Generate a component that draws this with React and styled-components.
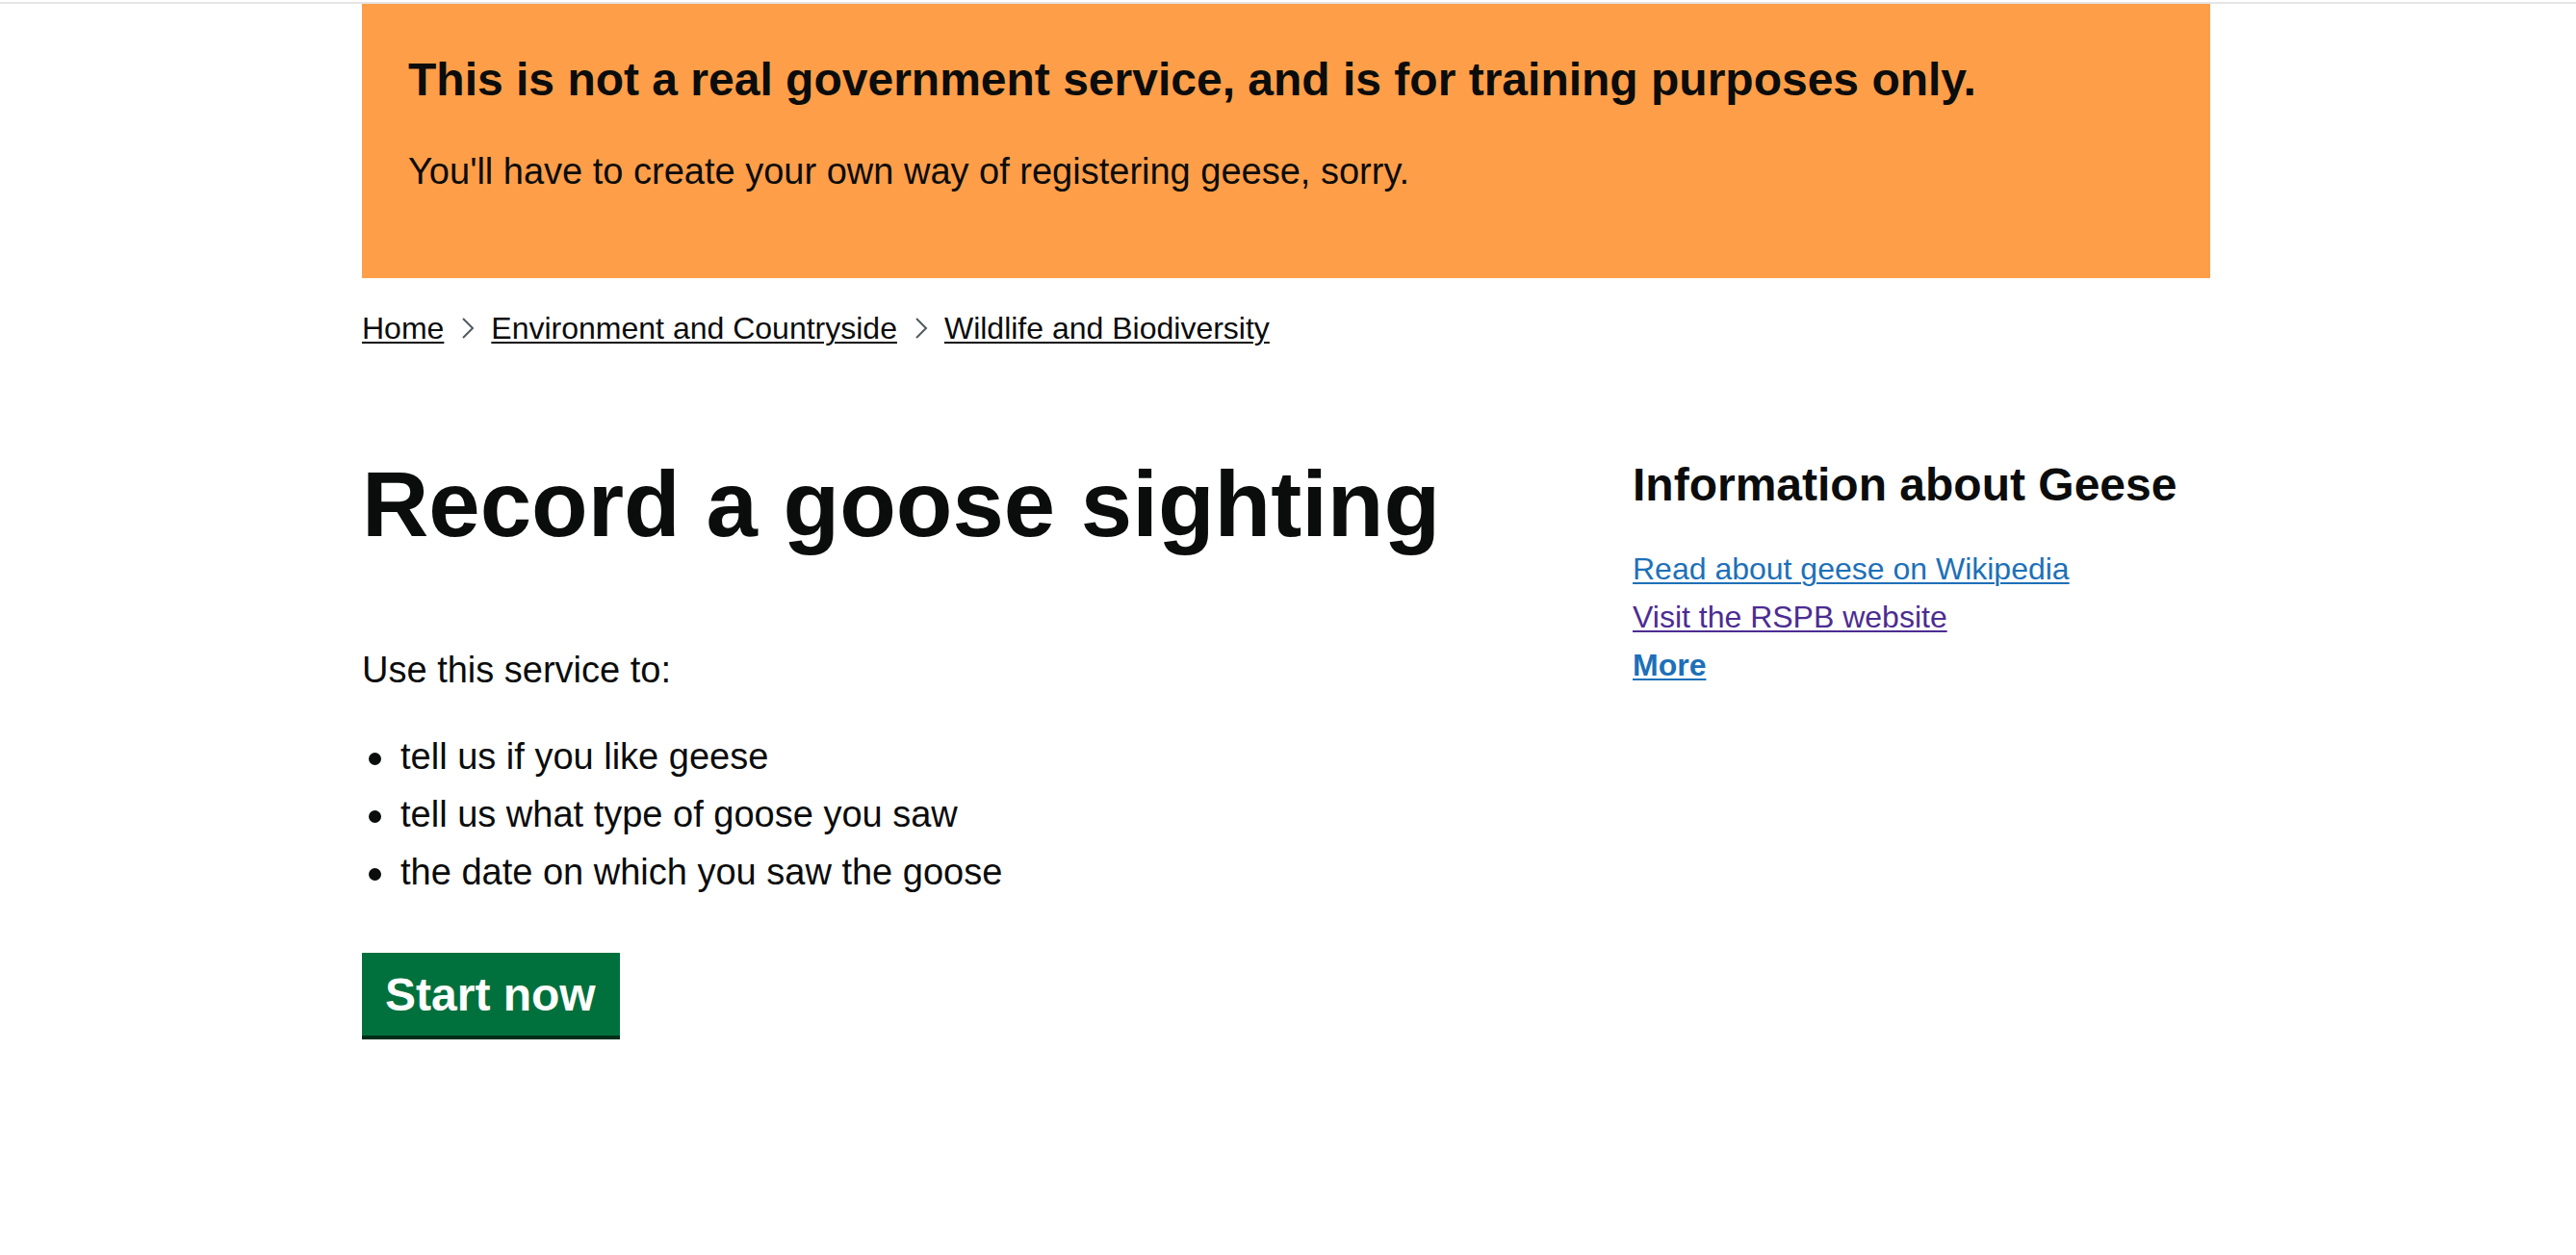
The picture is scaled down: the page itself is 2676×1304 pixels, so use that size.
import React from 'react';
import styled, { createGlobalStyle } from 'styled-components';

const GlobalStyle = createGlobalStyle`
    html, body {
        margin: 0;
        padding: 0;
        background: #ffffff;
    }
    body {
        font-family: "Liberation Sans", Arial, sans-serif;
        color: #0b0c0c;
        -webkit-font-smoothing: antialiased;
    }
`;

const TopRule = styled.div`
    height: 2px;
    margin-top: 2px;
    background: #e5e5e5;
`;

const Container = styled.div`
    width: 1920px;
    margin-left: calc(50% - 962px);
`;

const Banner = styled.div`
    background: #ff9e48;
    padding: 49px 48px 86px 48px;
`;

const BannerTitle = styled.h2`
    margin: 0 0 40px 0;
    font-size: 48px;
    line-height: 60px;
    font-weight: 700;
    color: #0b0c0c;
`;

const BannerText = styled.p`
    margin: 0;
    font-size: 38px;
    line-height: 50px;
    color: #0b0c0c;
`;

const Breadcrumbs = styled.ol`
    display: flex;
    align-items: center;
    list-style: none;
    margin: 32px 0 0 0;
    padding: 0;
    font-size: 32px;
    line-height: 40px;
`;

const Crumb = styled.li`
    display: flex;
    align-items: center;
`;

const CrumbLink = styled.a`
    color: #0b0c0c;
    text-decoration: underline;
    text-decoration-thickness: 2px;
    text-underline-offset: 0.1em;
`;

const Separator = styled.svg`
    width: 14px;
    height: 24px;
    margin: 0 17px 0 18px;
    flex-shrink: 0;
`;

const Main = styled.main`
    padding-top: 113px;
    padding-bottom: 100px;
`;

const Grid = styled.div`
    display: grid;
    grid-template-columns: 1260px 600px;
    column-gap: 60px;
    align-items: start;
`;

const Column = styled.div`
    display: flex;
    flex-direction: column;
    align-items: flex-start;
`;

const Title = styled.h1`
    margin: 0 0 97px 0;
    font-size: 96px;
    line-height: 100px;
    font-weight: 700;
    color: #0b0c0c;
`;

const Body = styled.p`
    margin: 0 0 40px 0;
    font-size: 38px;
    line-height: 50px;
`;

const BulletList = styled.ul`
    margin: 0 0 49px 0;
    padding: 0;
    list-style: none;
    font-size: 38px;
    line-height: 50px;
`;

const BulletItem = styled.li`
    padding-left: 40px;
    margin-bottom: 10px;

    &::before {
        content: "";
        display: inline-block;
        width: 13px;
        height: 13px;
        border-radius: 50%;
        background: #0b0c0c;
        margin-left: -33px;
        margin-right: 20px;
        vertical-align: 4px;
    }
`;

const StartButton = styled.a`
    display: inline-block;
    box-sizing: border-box;
    background: #00703c;
    color: #ffffff;
    border: 4px solid transparent;
    padding: 16px 21px 14px 20px;
    font-size: 48px;
    line-height: 48px;
    font-weight: 700;
    text-decoration: none;
    box-shadow: 0 4px 0 #002d18;
    cursor: pointer;
`;

const SideHeading = styled.h2`
    margin: 0 0 37px 0;
    font-size: 48px;
    line-height: 60px;
    font-weight: 700;
    color: #0b0c0c;
`;

const LinkList = styled.ul`
    list-style: none;
    margin: 0;
    padding: 0;
    font-size: 32px;
    line-height: 40px;

    li {
        margin-bottom: 10px;
    }
`;

const SideLink = styled.a`
    color: ${({ $visited }) => ($visited ? '#4c2c92' : '#1d70b8')};
    font-weight: ${({ $bold }) => ($bold ? 700 : 400)};
    text-decoration: underline;
    text-decoration-thickness: 2px;
    text-underline-offset: 0.1em;
`;

const Chevron = () => (
    <Separator viewBox="0 0 14 24" aria-hidden="true">
        <polyline points="2,2 12,12 2,22" fill="none" stroke="#505a5f" strokeWidth="2" />
    </Separator>
);

const crumbs = ['Home', 'Environment and Countryside', 'Wildlife and Biodiversity'];

const uses = [
    'tell us if you like geese',
    'tell us what type of goose you saw',
    'the date on which you saw the goose',
];

const App = () => {
    return (
        <>
            <GlobalStyle />
            <TopRule />
            <Container>
                <Banner>
                    <BannerTitle>This is not a real government service, and is for training purposes only.</BannerTitle>
                    <BannerText>You'll have to create your own way of registering geese, sorry.</BannerText>
                </Banner>

                <Breadcrumbs>
                    {crumbs.map((label, i) => (
                        <Crumb key={label}>
                            {i > 0 && <Chevron />}
                            <CrumbLink href="#">{label}</CrumbLink>
                        </Crumb>
                    ))}
                </Breadcrumbs>

                <Main>
                    <Grid>
                        <Column>
                            <Title>Record a goose sighting</Title>
                            <Body>Use this service to:</Body>
                            <BulletList>
                                {uses.map((text) => (
                                    <BulletItem key={text}>{text}</BulletItem>
                                ))}
                            </BulletList>
                            <StartButton href="#">Start now</StartButton>
                        </Column>
                        <aside>
                            <SideHeading>Information about Geese</SideHeading>
                            <LinkList>
                                <li><SideLink href="#">Read about geese on Wikipedia</SideLink></li>
                                <li><SideLink href="#" $visited>Visit the RSPB website</SideLink></li>
                                <li><SideLink href="#" $bold>More</SideLink></li>
                            </LinkList>
                        </aside>
                    </Grid>
                </Main>
            </Container>
        </>
    );
};

export default App;
